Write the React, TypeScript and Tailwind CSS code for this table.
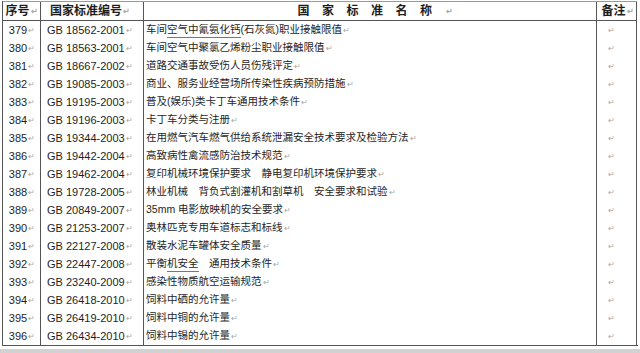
const rows: [string, string, string][] = [
  ["379", "GB 18562-2001", "车间空气中氰氨化钙(石灰氮)职业接触限值"],
  ["380", "GB 18563-2001", "车间空气中聚氯乙烯粉尘职业接触限值"],
  ["381", "GB 18667-2002", "道路交通事故受伤人员伤残评定"],
  ["382", "GB 19085-2003", "商业、服务业经营场所传染性疾病预防措施"],
  ["383", "GB 19195-2003", "普及(娱乐)类卡丁车通用技术条件"],
  ["384", "GB 19196-2003", "卡丁车分类与注册"],
  ["385", "GB 19344-2003", "在用燃气汽车燃气供给系统泄漏安全技术要求及检验方法"],
  ["386", "GB 19442-2004", "高致病性禽流感防治技术规范"],
  ["387", "GB 19462-2004", "复印机械环境保护要求　静电复印机环境保护要求"],
  ["388", "GB 19728-2005", "林业机械　背负式割灌机和割草机　安全要求和试验"],
  ["389", "GB 20849-2007", "35mm 电影放映机的安全要求"],
  ["390", "GB 21253-2007", "奥林匹克专用车道标志和标线"],
  ["391", "GB 22127-2008", "散装水泥车罐体安全质量"],
  ["392", "GB 22447-2008", "平衡机安全　通用技术条件"],
  ["393", "GB 23240-2009", "感染性物质航空运输规范"],
  ["394", "GB 26418-2010", "饲料中硒的允许量"],
  ["395", "GB 26419-2010", "饲料中铜的允许量"],
  ["396", "GB 26434-2010", "饲料中锡的允许量"],
];

// word-style paragraph mark
function Mark() {
  return <span className="ml-[1px] text-[8px] leading-none text-[#a8a8a8] translate-y-[1px]">↵</span>;
}

function Name({ text }: { text: string }) {
  // proofing underlines as they show in the source document
  if (text.startsWith("车间空气中氰")) {
    return (
      <>
        车间<span className="border-b border-[#777]">空气中氰氨化钙</span>(石灰氮)职业接触限值
      </>
    );
  }
  if (text.startsWith("平衡机")) {
    return (
      <>
        平衡<span className="border-b border-[#777]">机安全</span>　通用技术条件
      </>
    );
  }
  return <>{text}</>;
}

export default function App() {
  return (
    <div
      className="w-[640px] h-[353px] bg-white overflow-hidden text-[#1e1e1e]"
      style={{ fontFamily: '"Liberation Sans", "Noto Sans CJK SC", sans-serif' }}
    >
      <div className="ml-[2px] mt-[1px] w-[635px] border-l border-[#555]">
        <div className="grid grid-cols-[38px_103px_453px_40px] h-[20px] border-t border-t-[#9a9a9a] border-b border-b-[#555] font-bold text-[12px]">
          <div className="border-r border-[#555] flex items-center justify-center">
            序号<Mark />
          </div>
          <div className="border-r border-[#555] flex items-center justify-center pr-[4px]">
            国家标准编号<Mark />
          </div>
          <div className="border-r border-[#555] flex items-center justify-center pl-[10px]">
            <span className="tracking-[12.5px]">国家标准名称</span>
            <Mark />
          </div>
          <div className="border-r border-[#555] flex items-center justify-center pl-[2px]">
            备注<Mark />
          </div>
        </div>
        {rows.map(([no, code, name]) => (
          <div key={no} className="grid grid-cols-[38px_103px_453px_40px] h-[18px] text-[11px]">
            <div className="border-r border-[#555] flex items-center justify-center pl-[1px]">
              {no}
              <Mark />
            </div>
            <div className="border-r border-[#555] flex items-center pl-[6px]">
              {code}
              <Mark />
            </div>
            <div className="border-r border-[#555] flex items-center pl-[2px] text-[10.5px] whitespace-nowrap">
              <Name text={name} />
              <Mark />
            </div>
            <div className="border-r border-[#555] flex items-center pl-[10px]">
              <Mark />
            </div>
          </div>
        ))}
        <div className="h-0 border-b border-[#555] -ml-px w-[636px]" />
      </div>
      <div className="mt-[3px] h-[6px] bg-[#d2d2d2]" />
    </div>
  );
}
